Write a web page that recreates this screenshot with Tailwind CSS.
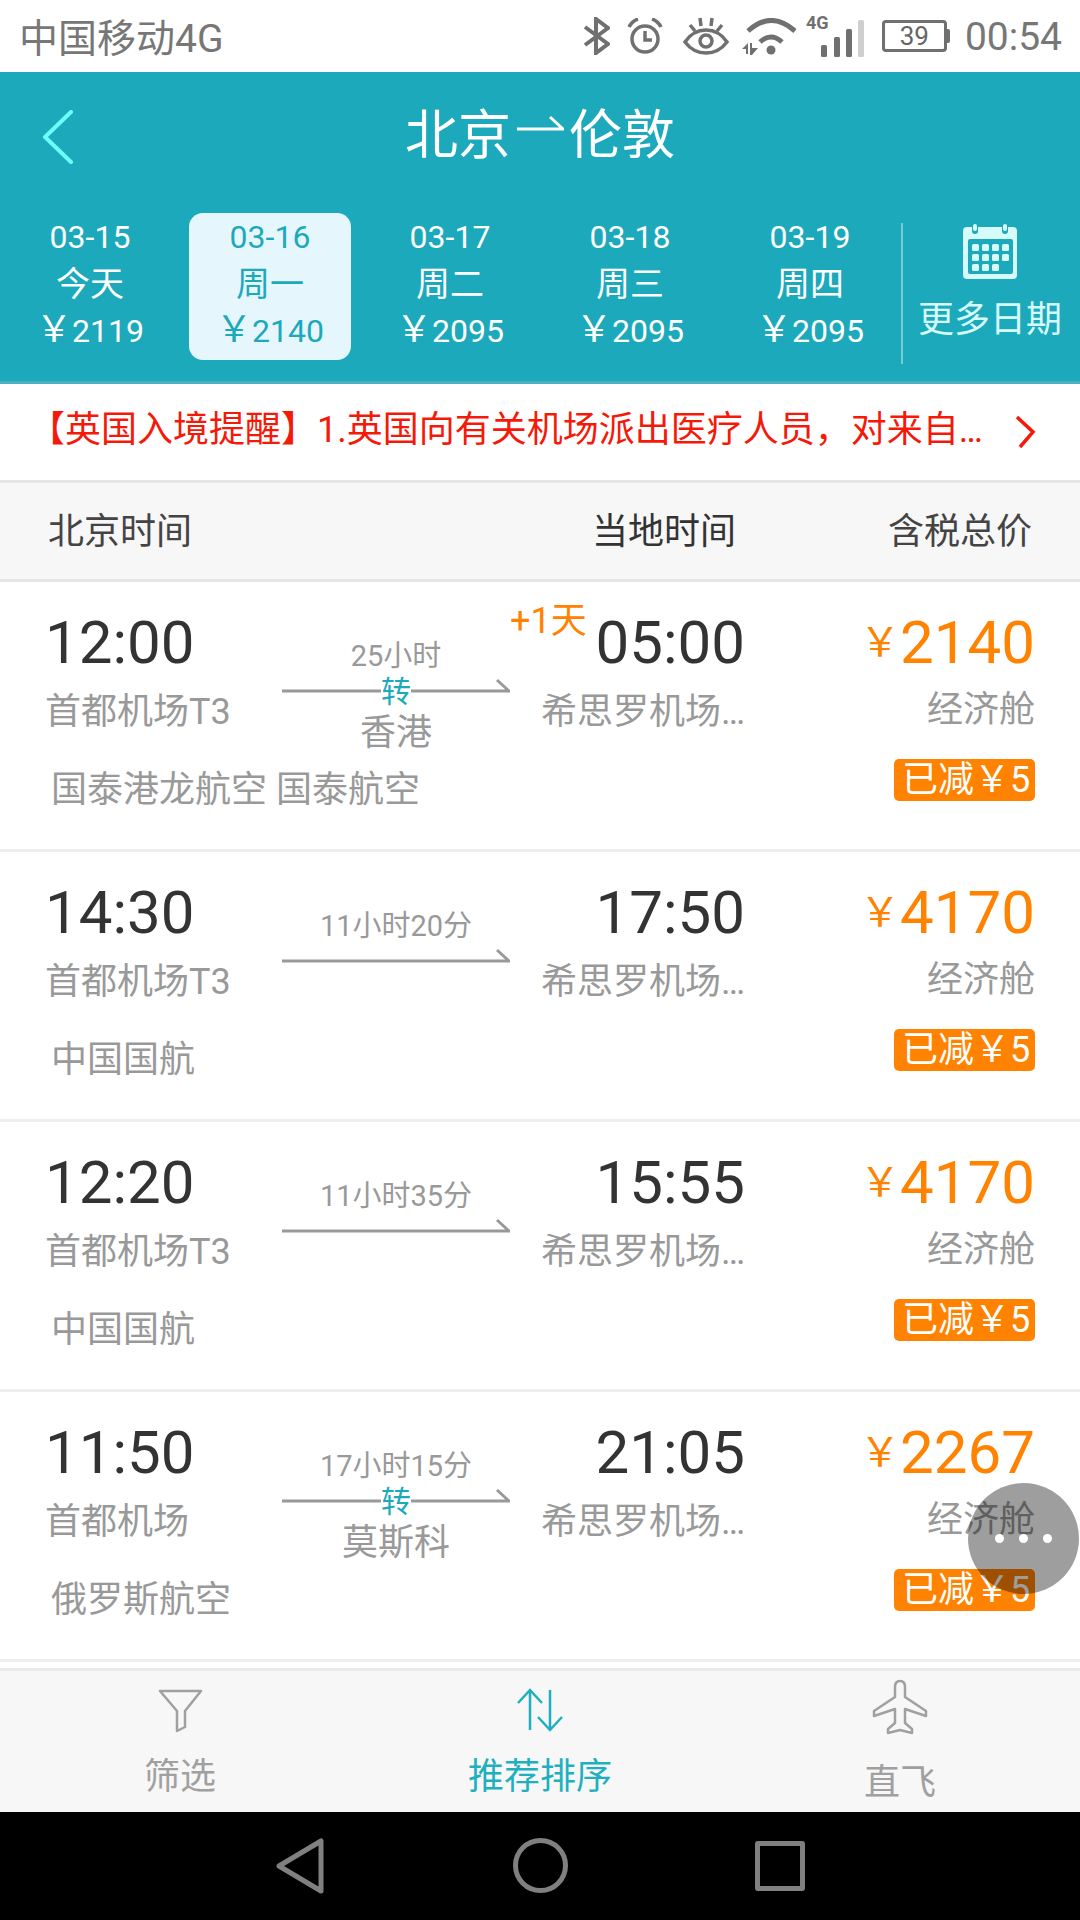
<!DOCTYPE html>
<html lang="zh">
<head>
  <meta charset="UTF-8">
  <title>北京-伦敦</title>
  <script src="https://cdn.jsdelivr.net/npm/@tailwindcss/browser@4"></script>
</head>
<body class="bg-white">
<div class="relative w-[1080px] h-[1920px] overflow-hidden flex flex-col font-[family-name:Roboto,'Noto_Sans_CJK_SC',sans-serif]">

  <!-- status bar -->
  <div class="h-[72px] shrink-0 flex items-center justify-between pl-[19px] pr-[18px] text-[#777]">
    <span class="text-[39px] leading-[46px] mt-[6px]">中国移动4G</span>
    <div class="flex items-center">
      <svg width="27" height="38" viewBox="0 0 27 38" fill="none" stroke="#707070" stroke-width="4"><path d="M2 10 L25 27 L13 36 V2 L25 11 L2 28"/></svg>
      <svg class="ml-[17px]" width="36" height="36" viewBox="0 0 36 36" fill="none" stroke="#707070" stroke-width="3.5"><circle cx="18" cy="21" r="13"/><path d="M18 13 V22 H25"/><path d="M2 9 Q5 3 11 1"/><path d="M34 9 Q31 3 25 1"/></svg>
      <svg class="ml-[20px]" width="46" height="38" viewBox="0 0 46 38" fill="none" stroke="#707070" stroke-width="3.5"><path d="M2 25 C8 16 15 13 23 13 S38 16 44 25 C38 33 31 36 23 36 S8 33 2 25Z"/><circle cx="23" cy="24" r="6"/><path d="M7 8 L12 14 M17 1 L18 9 M29 1 L28 9 M39 8 L34 14"/></svg>
      <svg class="ml-[13px]" width="54" height="37" viewBox="0 0 54 37" fill="none" stroke="#707070"><path stroke-width="5" d="M6 13 Q29 -8 53 13"/><path stroke-width="5" d="M18 24 Q29 14 40 24"/><circle cx="29" cy="32" r="4.5" fill="#707070" stroke="none"/><path fill="#707070" stroke="none" d="M0 31 L6 25 V36 H4 V31Z M8 25 H10 V30 L16 30 L10 37 H8Z"/></svg>
      <svg class="ml-[10px]" width="58" height="42" viewBox="0 0 58 42"><text x="0" y="14" font-size="18" font-weight="700" fill="#707070" font-family="Roboto">4G</text><rect x="15" y="30" width="6" height="12" rx="1.5" fill="#707070"/><rect x="28" y="22" width="6" height="20" rx="1.5" fill="#707070"/><rect x="40" y="14" width="6" height="28" rx="1.5" fill="#707070"/><rect x="52" y="5" width="6" height="37" rx="1.5" fill="#cfcfcf"/></svg>
      <div class="ml-[18px] flex items-center">
        <div class="w-[65px] h-[32px] border-[3px] border-[#707070] rounded-[4px] flex items-center justify-center text-[26px] leading-none text-[#666]">39</div>
        <div class="w-[3px] h-[14px] bg-[#707070] rounded-r-[2px]"></div>
      </div>
      <span class="ml-[15px] text-[39px] leading-[46px] mt-[2px]">00:54</span>
    </div>
  </div>

  <!-- teal header -->
  <div class="h-[312px] shrink-0 bg-[#1ca9bb] border-b-[3px] border-[#48b1bd]">
    <div class="h-[126px] grid grid-cols-[1fr_auto_1fr] items-center">
      <svg class="ml-[42px] mt-[4px]" width="32" height="54" viewBox="0 0 32 54" fill="none" stroke="#6ffcfc" stroke-width="4" stroke-linecap="round"><path d="M29 2 L3 27 L29 52" stroke-linejoin="round"/></svg>
      <div class="flex items-center text-white text-[53px] leading-[60px] mt-[2px]">
        <span>北京</span>
        <svg class="mx-[5px] -translate-y-[12px]" width="48" height="20" viewBox="0 0 48 20" fill="none" stroke="white" stroke-width="3"><path d="M1 15 H47 L34 3"/></svg>
        <span>伦敦</span>
      </div>
      <div></div>
    </div>
    <div class="mt-[15px] flex h-[151px] items-start text-white">
      <div class="w-[180px] pt-px text-center text-[32px] leading-[46.5px]"><p>03-15</p><p class="h-[46.5px] text-[34px]">今天</p><p class="h-[46.5px]"><span class="text-[36px]">￥</span>2119</p></div>
      <div class="w-[162px] mx-[9px] h-[147px] pt-px text-center text-[32px] leading-[46.5px] bg-[#e5f7fc] text-[#1ca9bb] rounded-[14px]"><p>03-16</p><p class="h-[46.5px] text-[34px]">周一</p><p class="h-[46.5px]"><span class="text-[36px]">￥</span>2140</p></div>
      <div class="w-[180px] pt-px text-center text-[32px] leading-[46.5px]"><p>03-17</p><p class="h-[46.5px] text-[34px]">周二</p><p class="h-[46.5px]"><span class="text-[36px]">￥</span>2095</p></div>
      <div class="w-[180px] pt-px text-center text-[32px] leading-[46.5px]"><p>03-18</p><p class="h-[46.5px] text-[34px]">周三</p><p class="h-[46.5px]"><span class="text-[36px]">￥</span>2095</p></div>
      <div class="w-[180px] pt-px text-center text-[32px] leading-[46.5px]"><p>03-19</p><p class="h-[46.5px] text-[34px]">周四</p><p class="h-[46.5px]"><span class="text-[36px]">￥</span>2095</p></div>
      <div class="w-[2px] h-[141px] mt-[10px] ml-px bg-white/40"></div>
      <div class="w-[174px] flex flex-col items-center pt-[11px] text-[#d6fbfb]">
        <svg width="54" height="55" viewBox="0 0 54 55">
          <path fill="#d6fbfb" d="M4 3 H9 V7 a3 3 0 0 0 6 0 V3 H39 V7 a3 3 0 0 0 6 0 V3 H50 a4 4 0 0 1 4 4 V51 a4 4 0 0 1 -4 4 H4 a4 4 0 0 1 -4 -4 V7 a4 4 0 0 1 4 -4Z"/>
          <rect x="10" y="0" width="4" height="7" rx="2" fill="#d6fbfb"/><rect x="40" y="0" width="4" height="7" rx="2" fill="#d6fbfb"/>
          <rect x="5" y="15" width="45" height="35" rx="2" fill="#1ca9bb"/>
          <g fill="#d6fbfb">
            <rect x="9" y="20" width="7" height="7" rx="1.5"/><rect x="19" y="20" width="7" height="7" rx="1.5"/><rect x="29" y="20" width="7" height="7" rx="1.5"/><rect x="39" y="20" width="7" height="7" rx="1.5"/>
            <rect x="9" y="30" width="7" height="7" rx="1.5"/><rect x="19" y="30" width="7" height="7" rx="1.5"/><rect x="29" y="30" width="7" height="7" rx="1.5"/><rect x="39" y="30" width="7" height="7" rx="1.5"/>
            <rect x="9" y="40" width="7" height="7" rx="1.5"/><rect x="19" y="40" width="7" height="7" rx="1.5"/><rect x="29" y="40" width="7" height="7" rx="1.5"/>
          </g>
        </svg>
        <span class="mt-[19px] text-[36px] leading-[44px]">更多日期</span>
      </div>
    </div>
  </div>

  <!-- notice -->
  <div class="h-[99px] shrink-0 border-b-[3px] border-[#e5e5e5] flex items-center justify-between pl-[29px] pr-[44px] text-[#f5190a]">
    <span class="text-[36px] leading-[44px] whitespace-nowrap -mt-[4px]">【英国入境提醒】1.英国向有关机场派出医疗人员，对来自…</span>
    <svg width="21" height="34" viewBox="0 0 21 34" fill="none" stroke="#f5190a" stroke-width="3.5"><path d="M2 2 L18 17 L5 32"/></svg>
  </div>

  <!-- column titles -->
  <div class="h-[99px] shrink-0 bg-[#f7f7f7] border-b-[3px] border-[#e5e5e5] flex items-center text-[36px] leading-[44px] pt-[2px]">
    <span class="ml-[48px] w-[544px] text-[#444]">北京时间</span>
    <span class="w-[296px] text-[#333]">当地时间</span>
    <span class="text-[#444]">含税总价</span>
  </div>

  <!-- flights -->
  <div class="h-[270px] shrink-0 border-b-[3px] border-[#eee] grid grid-cols-[282px_228px_235px_1fr]">
    <div class="pt-[31px] pl-[45px]">
      <p class="text-[60px] leading-[60px] text-[#333]">12:00</p>
      <p class="mt-[17px] text-[36px] leading-[44px] text-[#999]">首都机场T3</p>
      <p class="mt-[34px] ml-[6px] text-[36px] leading-[44px] text-[#999] whitespace-nowrap">国泰港龙航空 国泰航空</p>
    </div>
    <div class="pt-[57px] flex flex-col items-center">
      <p class="h-[34px] text-[29px] leading-[34px] text-[#999]">25小时</p>
      <div class="relative w-full h-[40px] -mt-[2px]">
        <svg class="block" width="228" height="40" viewBox="0 0 228 40" fill="none" stroke="#999" stroke-width="3"><path d="M0 20 H227 L215 9"/></svg>
        <span class="absolute left-[99px] top-[3px] w-[30px] h-[36px] bg-white text-[30px] leading-[36px] text-[#1ca9bb] text-center">转</span>
      </div>
      <p class="text-[36px] leading-[44px] text-[#999]">香港</p>
    </div>
    <div class="relative pt-[31px] text-right">
      <span class="absolute left-0 top-[19px] text-[36px] leading-[40px] text-[#ff8200]">+1天</span>
      <p class="text-[60px] leading-[60px] text-[#333]">05:00</p>
      <p class="mt-[17px] text-[36px] leading-[44px] text-[#999]">希思罗机场…</p>
    </div>
    <div class="pt-[31px] pr-[45px] flex flex-col items-end">
      <p class="h-[60px] flex items-center text-[60px] leading-[60px] text-[#ff8200]"><span class="text-[40px] leading-[40px]">￥</span>2140</p>
      <p class="mt-[15px] text-[36px] leading-[44px] text-[#999]">经济舱</p>
      <div class="mt-[27px] w-[141px] h-[42px] pl-[8px] bg-[#ff8200] rounded-[5px] text-white text-[36px] leading-[42px] whitespace-nowrap">已减￥5</div>
    </div>
  </div>

  <div class="h-[270px] shrink-0 border-b-[3px] border-[#eee] grid grid-cols-[282px_228px_235px_1fr]">
    <div class="pt-[31px] pl-[45px]">
      <p class="text-[60px] leading-[60px] text-[#333]">14:30</p>
      <p class="mt-[17px] text-[36px] leading-[44px] text-[#999]">首都机场T3</p>
      <p class="mt-[34px] ml-[6px] text-[36px] leading-[44px] text-[#999] whitespace-nowrap">中国国航</p>
    </div>
    <div class="pt-[57px] flex flex-col items-center">
      <p class="h-[34px] text-[29px] leading-[34px] text-[#999]">11小时20分</p>
      <svg class="block -mt-[2px]" width="228" height="40" viewBox="0 0 228 40" fill="none" stroke="#999" stroke-width="3"><path d="M0 20 H227 L215 9"/></svg>
    </div>
    <div class="pt-[31px] text-right">
      <p class="text-[60px] leading-[60px] text-[#333]">17:50</p>
      <p class="mt-[17px] text-[36px] leading-[44px] text-[#999]">希思罗机场…</p>
    </div>
    <div class="pt-[31px] pr-[45px] flex flex-col items-end">
      <p class="h-[60px] flex items-center text-[60px] leading-[60px] text-[#ff8200]"><span class="text-[40px] leading-[40px]">￥</span>4170</p>
      <p class="mt-[15px] text-[36px] leading-[44px] text-[#999]">经济舱</p>
      <div class="mt-[27px] w-[141px] h-[42px] pl-[8px] bg-[#ff8200] rounded-[5px] text-white text-[36px] leading-[42px] whitespace-nowrap">已减￥5</div>
    </div>
  </div>

  <div class="h-[270px] shrink-0 border-b-[3px] border-[#eee] grid grid-cols-[282px_228px_235px_1fr]">
    <div class="pt-[31px] pl-[45px]">
      <p class="text-[60px] leading-[60px] text-[#333]">12:20</p>
      <p class="mt-[17px] text-[36px] leading-[44px] text-[#999]">首都机场T3</p>
      <p class="mt-[34px] ml-[6px] text-[36px] leading-[44px] text-[#999] whitespace-nowrap">中国国航</p>
    </div>
    <div class="pt-[57px] flex flex-col items-center">
      <p class="h-[34px] text-[29px] leading-[34px] text-[#999]">11小时35分</p>
      <svg class="block -mt-[2px]" width="228" height="40" viewBox="0 0 228 40" fill="none" stroke="#999" stroke-width="3"><path d="M0 20 H227 L215 9"/></svg>
    </div>
    <div class="pt-[31px] text-right">
      <p class="text-[60px] leading-[60px] text-[#333]">15:55</p>
      <p class="mt-[17px] text-[36px] leading-[44px] text-[#999]">希思罗机场…</p>
    </div>
    <div class="pt-[31px] pr-[45px] flex flex-col items-end">
      <p class="h-[60px] flex items-center text-[60px] leading-[60px] text-[#ff8200]"><span class="text-[40px] leading-[40px]">￥</span>4170</p>
      <p class="mt-[15px] text-[36px] leading-[44px] text-[#999]">经济舱</p>
      <div class="mt-[27px] w-[141px] h-[42px] pl-[8px] bg-[#ff8200] rounded-[5px] text-white text-[36px] leading-[42px] whitespace-nowrap">已减￥5</div>
    </div>
  </div>

  <div class="h-[270px] shrink-0 border-b-[3px] border-[#eee] grid grid-cols-[282px_228px_235px_1fr]">
    <div class="pt-[31px] pl-[45px]">
      <p class="text-[60px] leading-[60px] text-[#333]">11:50</p>
      <p class="mt-[17px] text-[36px] leading-[44px] text-[#999]">首都机场</p>
      <p class="mt-[34px] ml-[6px] text-[36px] leading-[44px] text-[#999] whitespace-nowrap">俄罗斯航空</p>
    </div>
    <div class="pt-[57px] flex flex-col items-center">
      <p class="h-[34px] text-[29px] leading-[34px] text-[#999]">17小时15分</p>
      <div class="relative w-full h-[40px] -mt-[2px]">
        <svg class="block" width="228" height="40" viewBox="0 0 228 40" fill="none" stroke="#999" stroke-width="3"><path d="M0 20 H227 L215 9"/></svg>
        <span class="absolute left-[99px] top-[3px] w-[30px] h-[36px] bg-white text-[30px] leading-[36px] text-[#1ca9bb] text-center">转</span>
      </div>
      <p class="text-[36px] leading-[44px] text-[#999]">莫斯科</p>
    </div>
    <div class="pt-[31px] text-right">
      <p class="text-[60px] leading-[60px] text-[#333]">21:05</p>
      <p class="mt-[17px] text-[36px] leading-[44px] text-[#999]">希思罗机场…</p>
    </div>
    <div class="pt-[31px] pr-[45px] flex flex-col items-end">
      <p class="h-[60px] flex items-center text-[60px] leading-[60px] text-[#ff8200]"><span class="text-[40px] leading-[40px]">￥</span>2267</p>
      <p class="mt-[15px] text-[36px] leading-[44px] text-[#999]">经济舱</p>
      <div class="mt-[27px] w-[141px] h-[42px] pl-[8px] bg-[#ff8200] rounded-[5px] text-white text-[36px] leading-[42px] whitespace-nowrap">已减￥5</div>
    </div>
  </div>

  <div class="h-[6px] shrink-0"></div>

  <!-- bottom tabs -->
  <div class="h-[144px] shrink-0 bg-[#f7f7f7] border-t-[3px] border-[#e9e9e9] grid grid-cols-3 text-[36px] leading-[44px] text-[#a0a0a0]">
    <div class="pt-[9px] flex flex-col items-center">
      <svg width="60" height="60" viewBox="0 0 60 60" fill="none" stroke="#a0a0a0" stroke-width="2.5" stroke-linejoin="round"><path d="M10 11 H51 L35 31 V47 L27 51 V31Z"/></svg>
      <span class="mt-[15px]">筛选</span>
    </div>
    <div class="pt-[9px] flex flex-col items-center text-[#1fb0c0]">
      <svg width="60" height="60" viewBox="0 0 60 60" fill="none" stroke="#1fb0c0" stroke-width="2.5"><path d="M20 50 V10 M8 23 L20 10 L32 23"/><path d="M40 10 V50 M28 37 L40 50 L52 37"/></svg>
      <span class="mt-[15px]">推荐排序</span>
    </div>
    <div class="pt-[4px] flex flex-col items-center">
      <svg width="80" height="65" viewBox="0 0 80 65" fill="none" stroke="#a0a0a0" stroke-width="2.5" stroke-linejoin="round"><path d="M35 12 Q35 6 40 6 Q45 6 45 12 V22 L66 36 V41 L45 34 V48 L52 54 V58 L40 55 L28 58 V54 L35 48 V34 L14 41 V36 L35 22Z"/></svg>
      <span class="mt-[21px]">直飞</span>
    </div>
  </div>

  <!-- android nav -->
  <div class="h-[108px] shrink-0 bg-black flex items-center">
    <svg class="ml-[275px] mt-[-1px]" width="50" height="56" viewBox="0 0 50 56" fill="none" stroke="#808080" stroke-width="5" stroke-linejoin="round"><path d="M46 3 V53 L4 28Z"/></svg>
    <div class="ml-[188px] w-[55px] h-[55px] mt-[-1px] rounded-full border-[5px] border-[#808080]"></div>
    <div class="ml-[187px] w-[50px] h-[50px] mt-[-1px] rounded-[3px] border-[5px] border-[#808080]"></div>
  </div>

  <!-- floating button -->
  <div class="absolute left-[968px] top-[1483px] w-[111px] h-[111px] rounded-full bg-black/[0.38] flex items-center justify-center gap-[15px]">
    <span class="w-[9px] h-[9px] rounded-full bg-white"></span>
    <span class="w-[9px] h-[9px] rounded-full bg-white"></span>
    <span class="w-[9px] h-[9px] rounded-full bg-white"></span>
  </div>
</div>
</body>
</html>
